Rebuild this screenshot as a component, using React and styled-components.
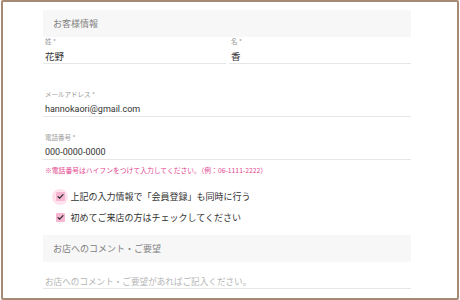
import React from "react";
import styled, { createGlobalStyle } from "styled-components";

const Global = createGlobalStyle`
  html, body { margin: 0; padding: 0; background: #fff; }
  body { font-family: "Noto Sans CJK JP", "Noto Sans", sans-serif; }
  * { box-sizing: border-box; }
`;

const Frame = styled.div`
  margin-left: 1px;
  width: 458px;
  height: 300px;
  border: 2px solid #a48a75;
  border-radius: 2px;
  padding: 8px 46px 0 40px;
  overflow: hidden;
`;

const SectionHead = styled.div`
  height: 27px;
  background: #f7f7f7;
  padding-left: 10px;
  display: flex;
  align-items: center;
  font-size: 9px;
  color: #808080;
  margin-top: ${(p) => p.$mt || 0}px;
`;

const Row = styled.div`
  display: grid;
  grid-template-columns: 183px 1fr;
  column-gap: 3px;
  margin-top: ${(p) => p.$mt || 0}px;
`;

const Field = styled.div`
  display: flex;
  flex-direction: column;
  margin-top: ${(p) => p.$mt || 0}px;
`;

const Label = styled.div`
  height: 9px;
  line-height: 9px;
  font-size: 6.5px;
  color: #9a9a9a;
  padding-left: 2px;
  white-space: nowrap;
`;

const Value = styled.div`
  margin-top: ${(p) => (p.$mt === undefined ? 3 : p.$mt)}px;
  height: 15px;
  line-height: 14px;
  font-size: ${(p) => (p.$placeholder ? 8.6 : p.$latin ? 9 : 9.5)}px;
  color: ${(p) => (p.$placeholder ? "#b4b4b4" : "#333")};
  padding-left: 2px;
  border-bottom: 1px solid #e6e6e6;
  white-space: nowrap;
  font-family: ${(p) => (p.$latin ? '"Roboto", "Noto Sans CJK JP", sans-serif' : '"Noto Sans CJK JP", sans-serif')};
`;

const Note = styled.div`
  margin-top: 5px;
  height: 10px;
  line-height: 10px;
  font-size: 6.8px;
  color: #e2468f;
  padding-left: 2px;
  white-space: nowrap;
`;

const Checks = styled.div`
  margin-top: 11px;
  display: flex;
  flex-direction: column;
`;

const CheckRow = styled.label`
  height: 21px;
  display: flex;
  align-items: center;
  padding-left: 12.5px;
  gap: 6px;
  font-size: 9px;
  color: #333;
`;

const CheckLayer = styled.span`
  position: relative;
  z-index: 0;
  display: flex;
`;

const Box = styled.span`
  position: relative;
  width: 9px;
  height: 9px;
  flex: none;
  background: #f6b5d0;
  border-radius: 1px;
  display: flex;
  align-items: center;
  justify-content: center;
  &::before {
    content: "";
    display: ${(p) => (p.$focus ? "block" : "none")};
    position: absolute;
    left: 50%;
    top: 50%;
    width: 16px;
    height: 16px;
    margin: -8px 0 0 -8px;
    border-radius: 50%;
    background: #fde2ed;
    z-index: -1;
  }
  svg { display: block; }
`;

function Check({ focus, children }) {
  return (
    <CheckRow>
      <CheckLayer>
        <Box $focus={focus}>
          <svg width="7" height="7" viewBox="0 0 7 7">
            <path d="M1 3.6 L2.7 5.2 L6 1.6" fill="none" stroke="#2b2b2b" strokeWidth="1.2" strokeLinecap="round" strokeLinejoin="round" />
          </svg>
        </Box>
      </CheckLayer>
      <span>{children}</span>
    </CheckRow>
  );
}

export default function App() {
  return (
    <>
      <Global />
      <Frame>
        <SectionHead>お客様情報</SectionHead>
        <Row>
          <Field>
            <Label>姓 *</Label>
            <Value>花野</Value>
          </Field>
          <Field>
            <Label>名 *</Label>
            <Value>香</Value>
          </Field>
        </Row>
        <Field $mt={26}>
          <Label>メールアドレス *</Label>
          <Value $latin>hannokaori@gmail.com</Value>
        </Field>
        <Field $mt={16}>
          <Label>電話番号 *</Label>
          <Value $latin>000-0000-0000</Value>
        </Field>
        <Note>※電話番号はハイフンをつけて入力してください。（例：06-1111-2222）</Note>
        <Checks>
          <Check focus>上記の入力情報で「会員登録」も同時に行う</Check>
          <Check>初めてご来店の方はチェックしてください</Check>
        </Checks>
        <SectionHead $mt={7}>お店へのコメント・ご要望</SectionHead>
        <Field>
          <Value $placeholder $mt={12}>お店へのコメント・ご要望があればご記入ください。</Value>
        </Field>
      </Frame>
    </>
  );
}
